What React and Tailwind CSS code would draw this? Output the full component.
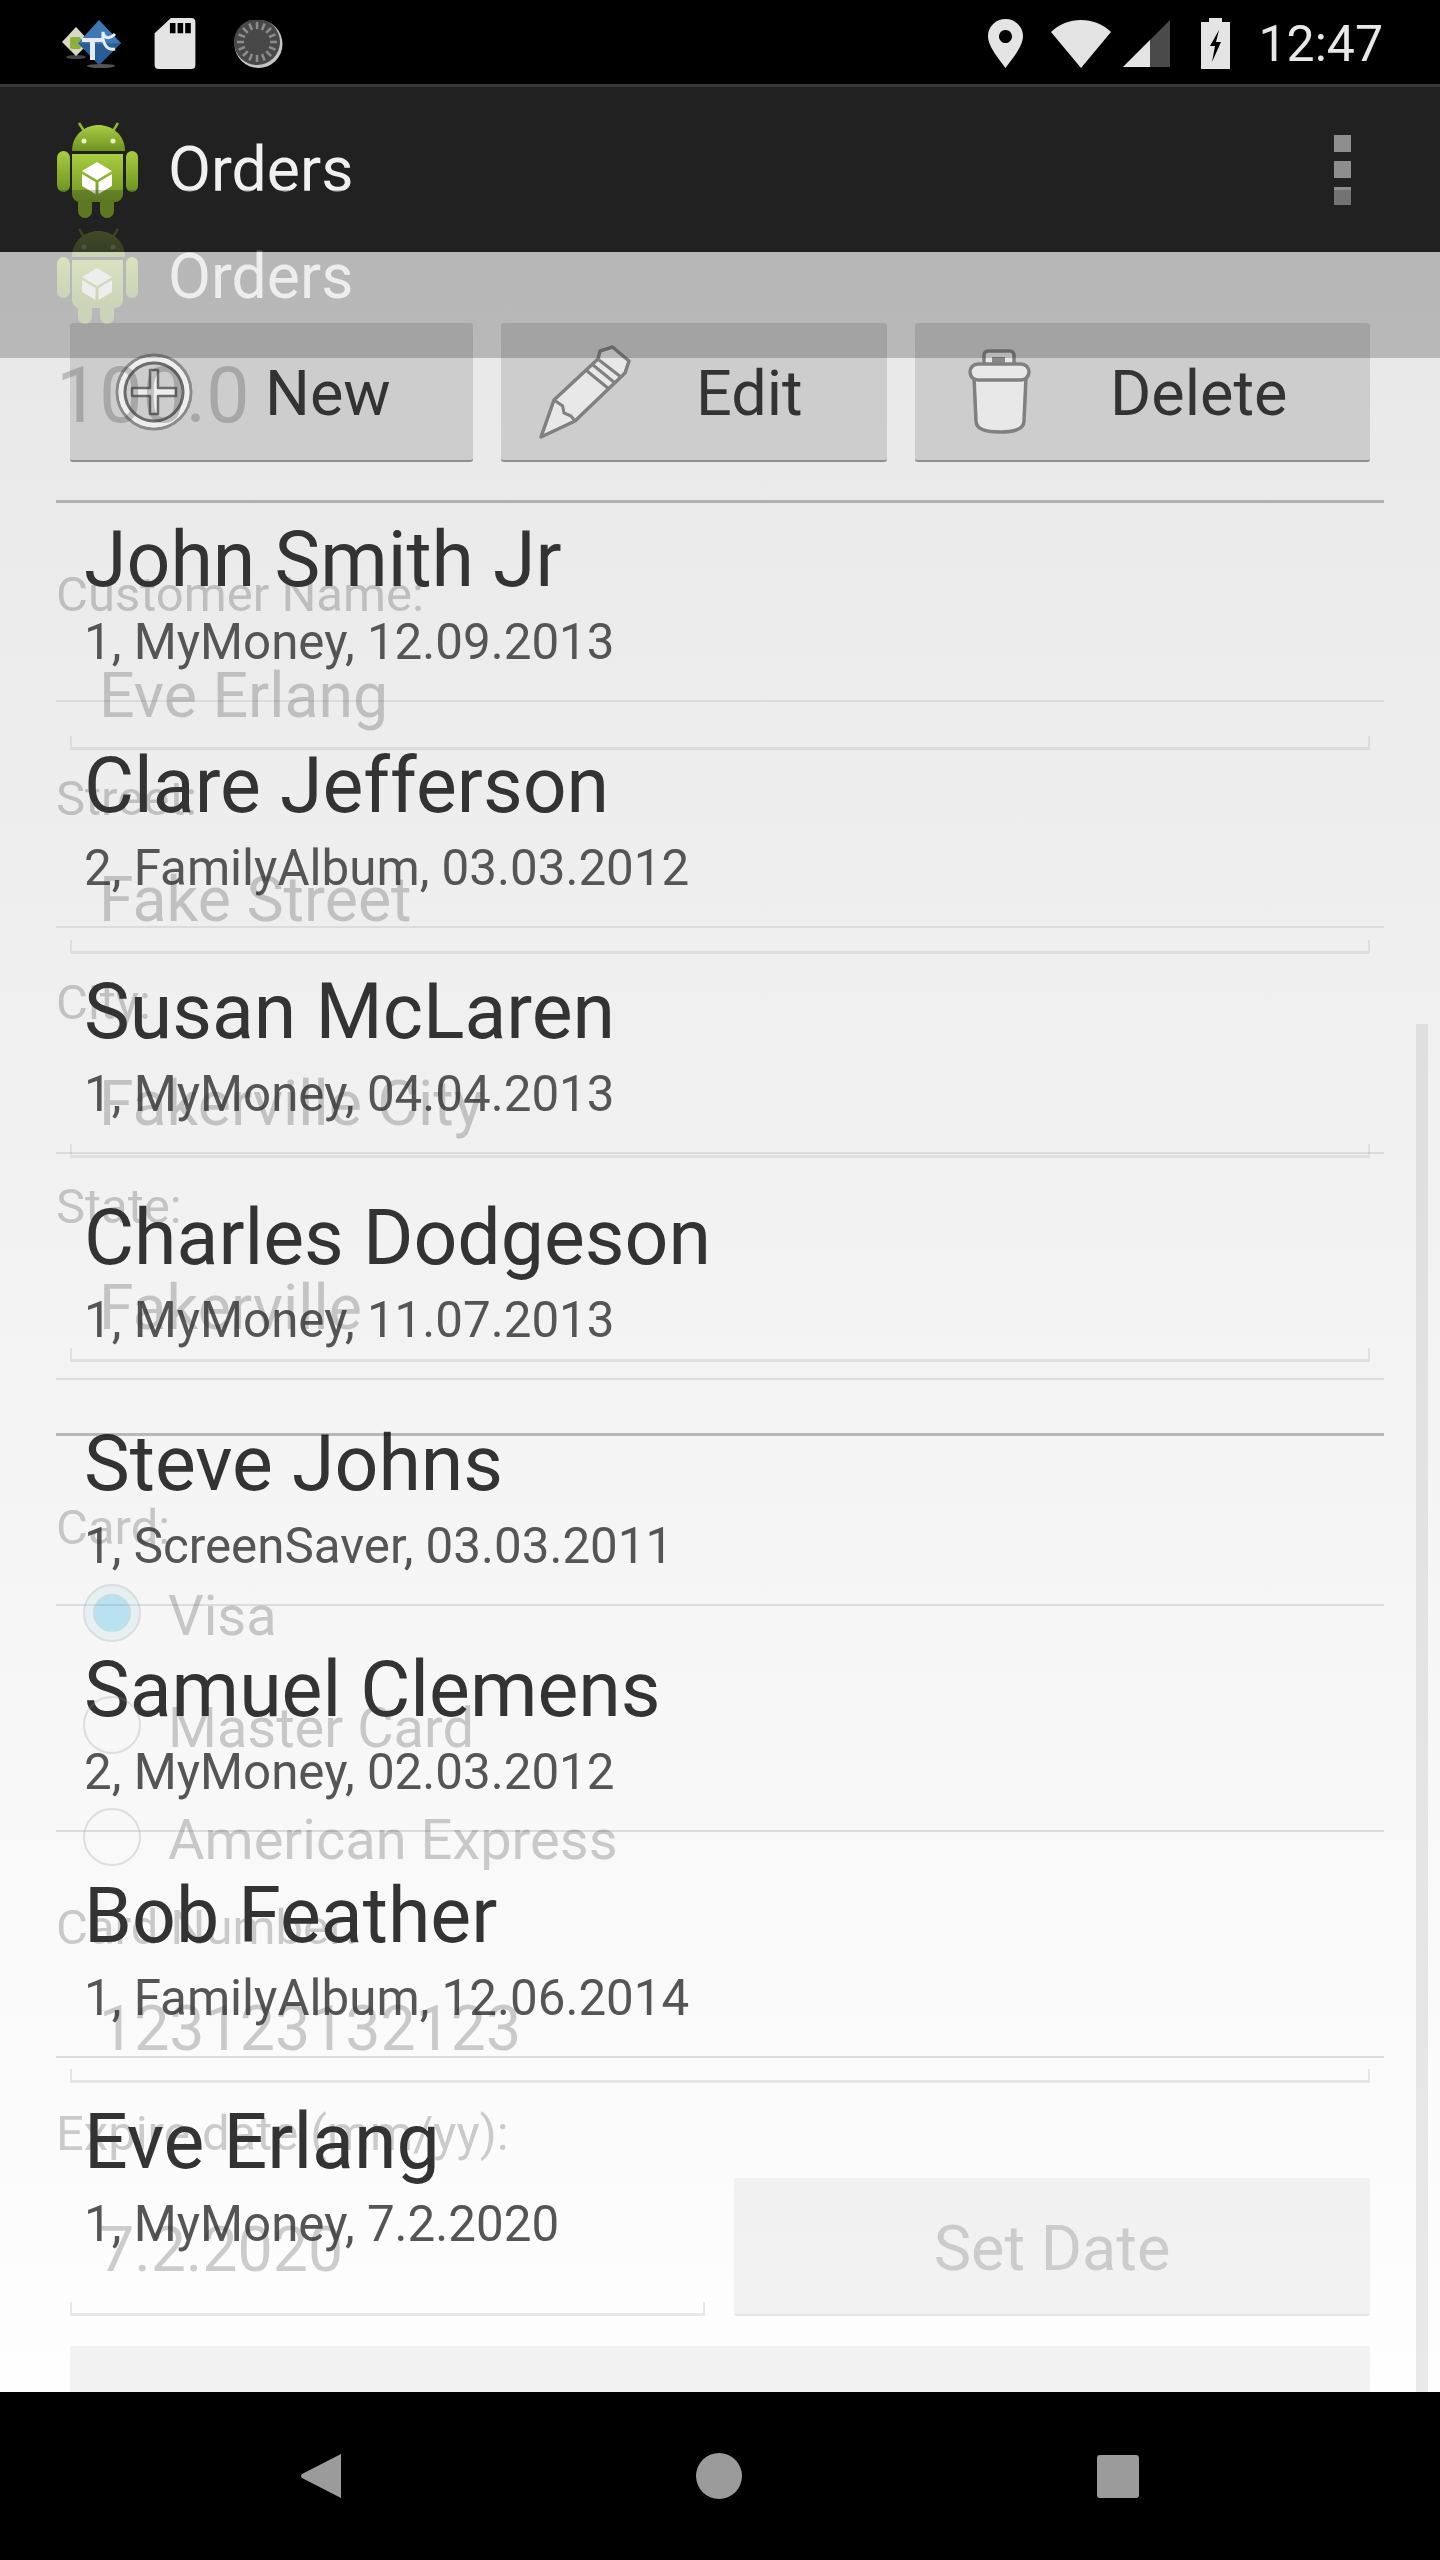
const ORDERS = [
    { name: "John Smith Jr", info: "1, MyMoney, 12.09.2013" },
    { name: "Clare Jefferson", info: "2, FamilyAlbum, 03.03.2012" },
    { name: "Susan McLaren", info: "1, MyMoney, 04.04.2013" },
    { name: "Charles Dodgeson", info: "1, MyMoney, 11.07.2013" },
    { name: "Steve Johns", info: "1, ScreenSaver, 03.03.2011" },
    { name: "Samuel Clemens", info: "2, MyMoney, 02.03.2012" },
    { name: "Bob Feather", info: "1, FamilyAlbum, 12.06.2014" },
    { name: "Eve Erlang", info: "1, MyMoney, 7.2.2020", last: true },
];

const AndroidIcon = () => (
    <svg width="81" height="96" viewBox="0 0 81 96" className="shrink-0">
        <defs>
            <linearGradient id="droid" x1="0" y1="0" x2="0" y2="1">
                <stop offset="0" stopColor="#a9cc42" />
                <stop offset="1" stopColor="#6d9420" />
            </linearGradient>
        </defs>
        <path d="M22 1 L27 9 M61 1 L56 9" stroke="#8fb534" strokeWidth="2.5" />
        <rect x="0" y="29" width="13" height="41" rx="6.5" fill="url(#droid)" />
        <rect x="69" y="29" width="12" height="41" rx="6" fill="url(#droid)" />
        <path d="M15 29 C15 12 29 3 41.5 3 C54 3 68 12 68 29 Z" fill="url(#droid)" />
        <rect x="21" y="68" width="14" height="28" rx="7" fill="#6f9622" />
        <rect x="43" y="68" width="14" height="28" rx="7" fill="#6f9622" />
        <path d="M15 32 H66 V72 a8 8 0 0 1 -8 8 H23 a8 8 0 0 1 -8 -8 Z" fill="url(#droid)" />
        <circle cx="27" cy="19" r="2.5" fill="#e8f0c8" />
        <circle cx="56" cy="19" r="2.5" fill="#e8f0c8" />
        <path d="M40 40 L55 49 L40 58 L25 49 Z" fill="#fff" />
        <path d="M25 52 L38.5 60 V72 L25 64 Z M55 52 L41.5 60 V72 L55 64 Z" fill="#fff" />
    </svg>
);

const AppLogo = () => (
    <svg width="60" height="48" viewBox="0 0 60 48">
        <ellipse cx="14" cy="37" rx="10" ry="2" fill="#444" />
        <ellipse cx="39" cy="46" rx="14" ry="2" fill="#555" />
        <path d="M14 7 L28 22 L14 36 L0 22 Z" fill="#d8d8c4" />
        <rect x="8" y="17" width="11" height="12" rx="2" fill="#8fae3a" />
        <path d="M37 0 L59 23 L37 45 L16 23 Z" fill="#3f78b4" />
        <path d="M37 24 L59 23 L37 45 L16 23 Z" fill="#2a5c96" />
        <path d="M20 18 H41 V22 H33 V40 H28 V22 H20 Z" fill="#e4ebf2" />
        <path d="M53 14 C47 20 42 18 41 12 C40 22 44 31 53 29" fill="none" stroke="#e4ebf2" strokeWidth="3" />
    </svg>
);

const SdIcon = () => (
    <svg width="42" height="51" viewBox="0 0 40 50">
        <path d="M16 0 H36 a4 4 0 0 1 4 4 V46 a4 4 0 0 1 -4 4 H4 a4 4 0 0 1 -4 -4 V15 Z" fill="#e4e4e4" />
        <path d="M15 5 H20.5 V15 H15 Z M22.5 5 H28 V15 H22.5 Z M30 5 H35.5 V15 H30 Z" fill="#000" />
    </svg>
);

const SpinnerIcon = () => (
    <svg width="49" height="48" viewBox="0 0 49 48">
        <circle cx="24.5" cy="24" r="24" fill="#c4c4c4" />
        <circle cx="23" cy="22" r="23" fill="#484848" />
        {Array.from({ length: 16 }).map((_, i) => (
            <line key={i} x1="23" y1="2" x2="23" y2="9" stroke="#8c8c8c" strokeWidth="2.5" transform={`rotate(${i * 22.5} 23 22)`} />
        ))}
    </svg>
);

const PinIcon = () => (
    <svg width="35" height="49" viewBox="0 0 35 49">
        <path fillRule="evenodd" d="M17.5 0 C27 0 35 7.5 35 17 C35 28 23 41 17.5 49 C12 41 0 28 0 17 C0 7.5 8 0 17.5 0 Z M17.5 11 a6.5 6.5 0 1 0 0.01 0 Z" fill="#e4e4e4" />
    </svg>
);

const WifiIcon = () => (
    <svg width="60" height="48" viewBox="0 0 60 48">
        <path d="M30 48 L0 12 C8 4 19 0 30 0 C41 0 52 4 60 12 Z" fill="#e4e4e4" />
    </svg>
);

const SignalIcon = () => (
    <svg width="47" height="47" viewBox="0 0 47 47">
        <path d="M47 0 V47 H0 Z" fill="#4a4a4a" />
        <path d="M27 20 V47 H0 Z" fill="#e4e4e4" />
    </svg>
);

const BatteryIcon = () => (
    <svg width="29" height="51" viewBox="0 0 29 51">
        <path d="M8 0 H21 V4 H29 V51 H0 V4 H8 Z" fill="#e4e4e4" />
        <path d="M18 12 L9 28 H14 L11 44 L20 24 H15 Z" fill="#000" />
    </svg>
);

const PlusCircle = () => (
    <svg width="78" height="82" viewBox="0 0 78 82" className="shrink-0">
        <circle cx="39" cy="41" r="37" fill="none" stroke="#8a8a8a" strokeWidth="3" />
        <circle cx="39" cy="41" r="33" fill="none" stroke="#eeeeee" strokeWidth="5" />
        <circle cx="39" cy="41" r="29" fill="none" stroke="#6c6c6c" strokeWidth="3" />
        <path d="M35 19 H43 V37 H61 V45 H43 V63 H35 V45 H17 V37 H35 Z" fill="#eeeeee" stroke="#6c6c6c" strokeWidth="2.5" strokeLinejoin="round" />
    </svg>
);

const Pencil = () => (
    <svg width="93" height="94" viewBox="0 0 93 94" className="shrink-0">
        <path d="M3 92 L16 55 L60 14 L62 6 L74.5 2 L91 16 L87 28 L37 76 Z" fill="#e8e8e8" stroke="#808080" strokeWidth="3.5" strokeLinejoin="round" />
        <path d="M16 55 L24.6 61 L26 68 L33 71 L37 76" fill="none" stroke="#808080" strokeWidth="3" />
        <path d="M49 26 L71 44 M55 20 L77 38 M61 15 L83 32" stroke="#808080" strokeWidth="3" />
    </svg>
);

const TrashCan = () => (
    <svg width="63" height="85" viewBox="0 0 63 85" className="shrink-0">
        <rect x="16" y="2" width="30" height="16" rx="4" fill="#e8e8e8" stroke="#808080" strokeWidth="3.5" />
        <rect x="24" y="8" width="13" height="6" fill="#888" />
        <path d="M6 28 H58 L56 72 C56 80 48 83 32 83 C16 83 8 80 8 72 Z" fill="#e8e8e8" stroke="#808080" strokeWidth="3.5" />
        <rect x="2" y="15" width="59" height="16" rx="8" fill="#e8e8e8" stroke="#808080" strokeWidth="3.5" />
    </svg>
);

const ToolButton = ({ className, icon, label, gap }) => (
    <div className={`flex items-center h-[139px] bg-[#cdcdcd] rounded-[3px] border-b-2 border-[#8f8f8f] ${className}`}>
        {icon}
        <span className={`pt-[5px] text-[63px] leading-[80px] text-[#333] ${gap}`}>{label}</span>
    </div>
);

const OrderRow = ({ name, info, last }) => (
    <div className={`h-[226px] pt-[39px] pl-[28px] ${last ? "" : "border-b-2 border-[#dcdcdc]"}`}>
        <p className="text-[77px] leading-[90px] text-[#333] whitespace-nowrap">{name}</p>
        <p className="mt-[5px] text-[49.3px] leading-[64px] text-[#555] whitespace-nowrap">{info}</p>
    </div>
);

const FormLabel = ({ children }) => (
    <p className="px-[56px] text-[49px] leading-[50px] h-[46px] whitespace-nowrap">{children}</p>
);

const InputLine = () => (
    <div className="h-[14px] border-x-2 border-b-[3px] border-[#a8a8a8]" />
);

const FormField = ({ label, value }) => (
    <div className="h-[204px]">
        <FormLabel>{label}</FormLabel>
        <div className="mx-[70px] mt-[40px]">
            <p className="pl-[29px] text-[62.6px] leading-[80px] whitespace-nowrap">{value}</p>
            <InputLine />
        </div>
    </div>
);

const RadioRow = ({ label, checked }) => (
    <div className="flex items-center h-[112px] pl-[83px] gap-[27px]">
        <div className={`flex items-center justify-center w-[58px] h-[58px] rounded-full border-2 border-[#909090] ${checked ? "bg-[#b8dbe6]" : ""}`}>
            {checked && <div className="w-[38px] h-[38px] rounded-full bg-[#00a2da] border-2 border-[#2c8fb0]" />}
        </div>
        <span className="pt-[5px] text-[56px] leading-[80px]">{label}</span>
    </div>
);

// previous activity fading out on top of everything
const FormGhost = () => (
    <div className="absolute left-0 top-[190px] w-[1440px] h-[2202px] overflow-hidden opacity-[.24] text-[#333]">
        <div className="flex items-center h-[168px] bg-[#212121] pl-[57px] gap-[30px] pt-[4px]">
            <AndroidIcon />
            <span className="pt-[2px] text-[62.5px] leading-[80px] text-white">Orders</span>
        </div>
        <p className="pl-[56px] h-[76px] text-[77px] leading-[76px]">100.0</p>
        <div className="mx-[56px] mt-[66px] h-[3px] bg-black" />
        <div className="mt-[67px]">
            <FormField label="Customer Name:" value="Eve Erlang" />
            <FormField label="Street:" value="Fake Street" />
            <FormField label="City:" value="Fakerville City" />
            <FormField label="State:" value="Fakerville" />
        </div>
        <div className="mx-[56px] mt-[47px] h-[3px] bg-black" />
        <div className="mt-[67px]"><FormLabel>Card:</FormLabel></div>
        <div className="mt-[8px]">
            <RadioRow label="Visa" checked />
            <RadioRow label="Master Card" />
            <RadioRow label="American Express" />
        </div>
        <div className="mt-[10px]"><FormField label="Card Number:" value="123123132123" /></div>
        <div className="mt-[2px]"><FormLabel>Expire date (mm/yy):</FormLabel></div>
        <div className="flex mx-[70px] mt-[23px] gap-[29px] h-[138px]">
            <div className="flex flex-col justify-between w-[635px] pt-[32px]">
                <p className="pl-[29px] text-[62.6px] leading-[80px]">7.2.2020</p>
                <InputLine />
            </div>
            <div className="flex items-center justify-center flex-1 bg-[#d0d0d0] rounded-[3px] border-b-2 border-[#a0a0a0]">
                <span className="pt-[5px] text-[63px] leading-[80px]">Set Date</span>
            </div>
        </div>
        <div className="mx-[70px] mt-[30px] h-[140px] bg-[#d0d0d0] rounded-[3px]" />
        <div className="absolute right-[12px] top-[834px] bottom-0 w-[12px] bg-[#aaaaaa]" />
    </div>
);

const App = () => {
    return (
        <div className="relative flex flex-col w-[1440px] h-[2560px] overflow-hidden bg-black font-['Roboto',sans-serif]">
            <div className="flex items-center justify-between h-[84px] pl-[62px] pr-[57px] pt-[3px] bg-black">
                <div className="flex items-center">
                    <AppLogo />
                    <div className="ml-[32px]"><SdIcon /></div>
                    <div className="ml-[38px]"><SpinnerIcon /></div>
                </div>
                <div className="flex items-center">
                    <PinIcon />
                    <div className="ml-[28px]"><WifiIcon /></div>
                    <div className="ml-[12px]"><SignalIcon /></div>
                    <div className="ml-[31px]"><BatteryIcon /></div>
                    <span className="ml-[28px] text-[50px] leading-[60px] text-[#e8e8e8]">12:47</span>
                </div>
            </div>

            <div className="flex items-center justify-between h-[168px] pl-[57px] pr-[89px] bg-[#212121] border-t-[3px] border-[#3a3a3a]">
                <div className="flex items-center gap-[30px]">
                    <AndroidIcon />
                    <span className="text-[62.5px] leading-[80px] text-[#f0f0f0]">Orders</span>
                </div>
                <div className="flex flex-col gap-[9px]">
                    <div className="w-[17px] h-[17px] bg-[#8e8e8e]" />
                    <div className="w-[17px] h-[17px] bg-[#8e8e8e]" />
                    <div className="w-[17px] h-[18px] bg-[#8e8e8e]" />
                </div>
            </div>

            <div className="flex-1 min-h-0 overflow-hidden bg-linear-to-b from-[#e8e8e8] to-[#fefefe]">
                <div className="flex px-[70px] mt-[71px] gap-[28px]">
                    <ToolButton className="w-[403px] pl-[45px]" icon={<PlusCircle />} label="New" gap="ml-[72px]" />
                    <ToolButton className="w-[386px] pl-[37px]" icon={<Pencil />} label="Edit" gap="ml-[65px]" />
                    <ToolButton className="w-[455px] pl-[53px]" icon={<TrashCan />} label="Delete" gap="ml-[79px]" />
                </div>
                <div className="mx-[56px] mt-[14px]">
                    {ORDERS.map((order) => (
                        <OrderRow key={order.name} {...order} />
                    ))}
                </div>
            </div>

            <div className="flex items-center justify-center h-[168px] gap-[355px] bg-black">
                <svg width="40" height="46" viewBox="0 0 40 46">
                    <path d="M40 1 V45 L1 25 Q-1 23 1 21 Z" fill="#9b9b9b" />
                </svg>
                <div className="w-[46px] h-[46px] rounded-full bg-[#9b9b9b]" />
                <div className="w-[42px] h-[43px] rounded-[3px] bg-[#9b9b9b]" />
            </div>

            <FormGhost />
        </div>
    );
};

export default App;
